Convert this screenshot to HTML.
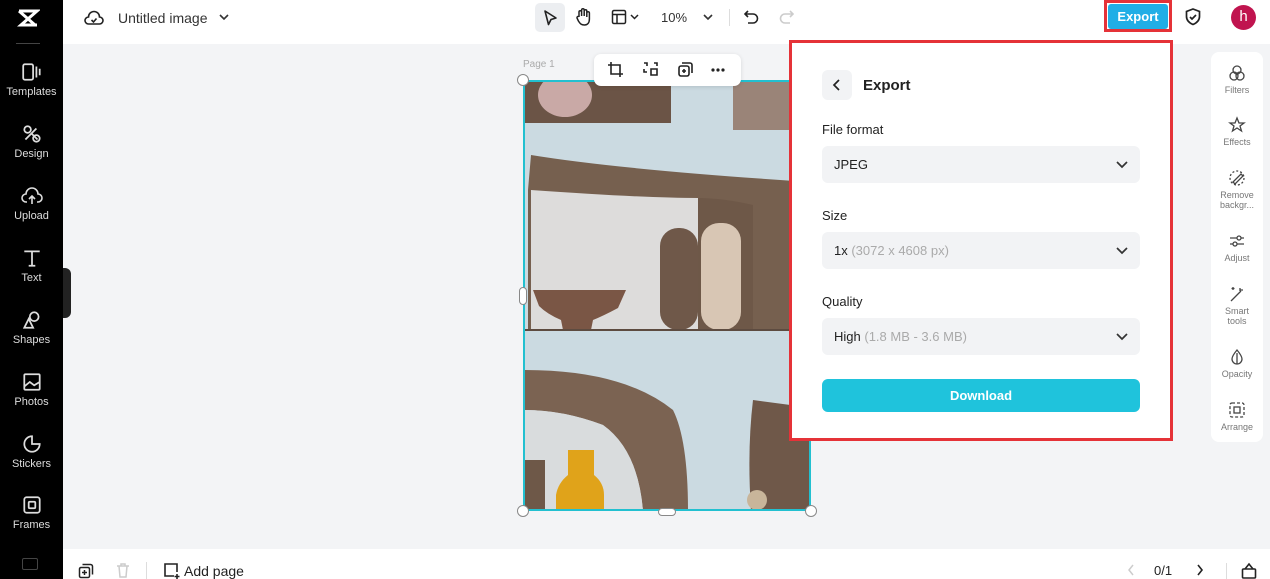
<!DOCTYPE html>
<html><head><meta charset="utf-8"><style>
*{margin:0;padding:0;box-sizing:border-box}
body{width:1270px;height:579px;overflow:hidden;background:#f3f4f6;font-family:"Liberation Sans",sans-serif;position:relative;color:#222}
.abs{position:absolute}
#side{left:0;top:0;width:63px;height:579px;background:#000}
.si{position:absolute;left:0;width:63px;text-align:center;color:#ddd;font-size:11px}
.si svg{display:block;margin:0 auto 4px}
#top{left:63px;top:0;width:1207px;height:44px;background:#fff}
#bot{left:63px;top:549px;width:1207px;height:30px;background:#fff}
.sel{position:absolute;left:822px;width:318px;height:37px;background:#f2f3f5;border-radius:6px;font-size:13px;padding:11px 12px;color:#222}
.sel span{color:#aaa}
.sel svg{position:absolute;right:12px;top:15px}
.lab{position:absolute;left:822px;font-size:13px;color:#222}
.rt{position:absolute;left:1211px;width:52px;text-align:center;font-size:9px;color:#777;line-height:10px}
.rt svg{display:block;margin:0 auto 3px}
</style></head><body>
<div id="side" class="abs">
 <svg class="abs" style="left:16px;top:8px" width="24" height="20" viewBox="0 0 24 20"><path d="M3 3h18L5 17h16M3 3l16 14M21 3L5 17" stroke="#fff" stroke-width="3" fill="none"/></svg>
 <div class="abs" style="left:16px;top:43px;width:24px;height:1px;background:#444"></div>
 <div class="si" style="top:62px"><svg width="22" height="20" viewBox="0 0 20 18" fill="none" stroke="#ddd" stroke-width="1.6"><rect x="2" y="2" width="9" height="14" rx="1.5"/><path d="M14 4v10M17 6v6"/></svg>Templates</div>
 <div class="si" style="top:124px"><svg width="22" height="20" viewBox="0 0 20 18" fill="none" stroke="#ddd" stroke-width="1.6"><circle cx="6" cy="5" r="3"/><path d="M9 8l6 6M4 14l10-10"/><circle cx="14" cy="13" r="3"/></svg>Design</div>
 <div class="si" style="top:186px"><svg width="22" height="20" viewBox="0 0 22 18" fill="none" stroke="#ddd" stroke-width="1.6"><path d="M6 15H5a4 4 0 010-8 6 6 0 0112 0 4 4 0 010 8h-1M11 9v8M8 12l3-3 3 3"/></svg>Upload</div>
 <div class="si" style="top:248px"><svg width="22" height="20" viewBox="0 0 20 18" fill="none" stroke="#ddd" stroke-width="1.6"><path d="M3 3h14M10 3v13M7 16h6"/></svg>Text</div>
 <div class="si" style="top:310px"><svg width="22" height="20" viewBox="0 0 20 18" fill="none" stroke="#ddd" stroke-width="1.6"><circle cx="12" cy="6" r="4"/><path d="M3 16l4-8 4 8z"/></svg>Shapes</div>
 <div class="si" style="top:372px"><svg width="22" height="20" viewBox="0 0 20 18" fill="none" stroke="#ddd" stroke-width="1.6"><rect x="3" y="2" width="14" height="14" rx="1"/><path d="M3 13l5-4 4 3 5-3"/></svg>Photos</div>
 <div class="si" style="top:434px"><svg width="22" height="20" viewBox="0 0 20 18" fill="none" stroke="#ddd" stroke-width="1.6"><path d="M10 2a7 7 0 107 7h-7z"/></svg>Stickers</div>
 <div class="si" style="top:495px"><svg width="22" height="20" viewBox="0 0 20 18" fill="none" stroke="#ddd" stroke-width="1.6"><rect x="3" y="2" width="14" height="14" rx="2"/><rect x="7" y="6" width="6" height="6" rx="1"/></svg>Frames</div>
 <div class="abs" style="left:22px;top:558px;width:16px;height:12px;border:1.5px solid #444;border-radius:2px"></div>
</div>
<div class="abs" style="left:63px;top:268px;width:8px;height:50px;background:#222;border-radius:0 6px 6px 0"></div>
<div id="top" class="abs"></div>
<svg class="abs" style="left:84px;top:9px" width="20" height="18" viewBox="0 0 20 18" fill="none" stroke="#222" stroke-width="1.6"><path d="M5 15H4.5a3.5 3.5 0 010-7 5.5 5.5 0 0111 0 3.5 3.5 0 010 7z"/><path d="M7.5 11l2 2 3-3.5"/></svg>
<div class="abs" style="left:118px;top:10px;font-size:14px;color:#333">Untitled image</div>
<svg class="abs" style="left:219px;top:13px" width="10" height="8"><path d="M1 2l4 4 4-4" stroke="#333" stroke-width="1.6" fill="none"/></svg>
<div class="abs" style="left:535px;top:3px;width:30px;height:29px;background:#eceef1;border-radius:5px"></div>
<svg class="abs" style="left:541px;top:8px" width="18" height="20"><path d="M4 3l11 7-5 1.5-2.5 5z" stroke="#222" stroke-width="1.6" fill="none" stroke-linejoin="round"/></svg>
<svg class="abs" style="left:574px;top:7px" width="18" height="20" fill="none" stroke="#222" stroke-width="1.5"><path d="M5 10V5a1.3 1.3 0 012.6 0v4V3a1.3 1.3 0 012.6 0v6V4a1.3 1.3 0 012.6 0v6V6a1.3 1.3 0 012.6 0v6c0 4-2 6-5 6s-4-1-6-4L3 11a1.3 1.3 0 012-1.4z"/></svg>
<svg class="abs" style="left:611px;top:9px" width="30" height="16" fill="none" stroke="#222" stroke-width="1.5"><rect x="1.5" y="1.5" width="13" height="13" rx="1.5"/><path d="M1.5 5.5h13M6 5.5v9M20 6l3.5 3.5L27 6"/></svg>
<div class="abs" style="left:661px;top:10px;font-size:13px;color:#333">10%</div>
<svg class="abs" style="left:703px;top:13px" width="10" height="8"><path d="M1 2l4 4 4-4" stroke="#333" stroke-width="1.6" fill="none"/></svg>
<div class="abs" style="left:729px;top:9px;width:1px;height:17px;background:#ddd"></div>
<svg class="abs" style="left:743px;top:9px" width="18" height="16" fill="none" stroke="#222" stroke-width="1.6"><path d="M5 2L2 5l3 3M2 5h8a4.5 4.5 0 010 9H5"/></svg>
<svg class="abs" style="left:777px;top:9px" width="18" height="16" fill="none" stroke="#ccc" stroke-width="1.6"><path d="M13 2l3 3-3 3M16 5H8a4.5 4.5 0 000 9h5"/></svg>
<div class="abs" style="left:1104px;top:0;width:68px;height:32px;border:3px solid #e53238"></div>
<div class="abs" style="left:1108px;top:4px;width:60px;height:25px;background:#21aee6;border-radius:3px;color:#fff;font-weight:bold;font-size:13px;text-align:center;line-height:25px">Export</div>
<svg class="abs" style="left:1184px;top:7px" width="18" height="20" fill="none" stroke="#222" stroke-width="1.7"><path d="M9 2l6.5 2.5v5c0 4-3 6.5-6.5 8-3.5-1.5-6.5-4-6.5-8v-5z"/><path d="M6 10l2 2 4-4"/></svg>
<div class="abs" style="left:1231px;top:5px;width:25px;height:25px;border-radius:50%;background:#c0144f;color:#fff;font-size:15px;text-align:center;line-height:24px">h</div>

<div class="abs" style="left:523px;top:59px;font-size:10px;color:#aaa">Page 1</div>
<svg class="abs" style="left:523px;top:80px" width="288" height="431" viewBox="0 0 288 431">
 <rect width="288" height="431" fill="#cbdae1"/>
 <rect x="2" y="0" width="146" height="43" fill="#6b5446"/>
 <ellipse cx="42" cy="15" rx="27" ry="22" fill="#c9a9a6"/>
 <rect x="210" y="0" width="78" height="50" fill="#9a8478"/>
 <path d="M5 110L8 75Q100 90 288 102V250H5z" fill="#76604f"/>
 <path d="M8 110Q120 118 175 118L175 250H8z" fill="#dddcdb"/>
 <path d="M175 118Q200 118 230 125L230 250H175z" fill="#6e5848"/>
 <rect x="137" y="148" width="38" height="102" rx="18" fill="#6f5849"/>
 <rect x="178" y="143" width="40" height="107" rx="18" fill="#d8c6b4"/>
 <path d="M10 210h93l-8 18q-15 8-25 12l-2 10H40l-2-10q-14-6-22-14z" fill="#7a5645"/>
 <rect x="0" y="249" width="288" height="2" fill="#5d4b40"/>
 <path d="M2 290Q100 290 150 330Q165 360 165 431H120Q115 370 80 345Q40 330 2 330z" fill="#7b6352"/>
 <path d="M2 330Q40 330 80 345Q115 370 120 431H2z" fill="#d9dcdd"/>
 <rect x="2" y="380" width="20" height="51" fill="#6e5848"/>
 <path d="M230 320L275 326 288 330V431H228Q224 370 230 320z" fill="#6f5849"/>
 <path d="M45 370h26v25q10 8 10 20v16H33v-16q2-12 12-20z" fill="#e0a31a"/>
 <circle cx="234" cy="420" r="10" fill="#c8b59a"/>
</svg>
<div class="abs" style="left:523px;top:80px;width:288px;height:431px;border:2px solid #22c0d0"></div>
<div class="abs" style="left:517px;top:74px;width:12px;height:12px;border-radius:50%;background:#fff;border:1px solid #888"></div>
<div class="abs" style="left:517px;top:505px;width:12px;height:12px;border-radius:50%;background:#fff;border:1px solid #888"></div>
<div class="abs" style="left:805px;top:505px;width:12px;height:12px;border-radius:50%;background:#fff;border:1px solid #888"></div>
<div class="abs" style="left:519px;top:287px;width:8px;height:18px;border-radius:4px;background:#fff;border:1px solid #888"></div>
<div class="abs" style="left:658px;top:508px;width:18px;height:8px;border-radius:4px;background:#fff;border:1px solid #888"></div>
<div class="abs" style="left:594px;top:54px;width:147px;height:32px;background:#fff;border-radius:7px;box-shadow:0 1px 4px rgba(0,0,0,.12)"></div>
<svg class="abs" style="left:607px;top:61px" width="124" height="18" fill="none" stroke="#222" stroke-width="1.6"><path d="M4 1v12h12M1 4h12v12"/><path d="M37 2h3v3M37 8v3h3M47 2h3v3M44 8h6v6h-6z"/><rect x="72" y="5" width="10" height="10" rx="2"/><path d="M75 2h8a2 2 0 012 2v8M77 8v4M75 10h4"/><circle cx="106" cy="9" r=".8" fill="#222"/><circle cx="111" cy="9" r=".8" fill="#222"/><circle cx="116" cy="9" r=".8" fill="#222"/></svg>

<div class="abs" style="left:789px;top:40px;width:384px;height:401px;border:3px solid #e53238;background:#fff"></div>
<div class="abs" style="left:822px;top:70px;width:30px;height:30px;background:#f2f3f5;border-radius:6px"></div>
<svg class="abs" style="left:832px;top:79px" width="10" height="12"><path d="M7 1L2 6l5 5" stroke="#222" stroke-width="1.7" fill="none"/></svg>
<div class="abs" style="left:863px;top:77px;font-size:15px;font-weight:bold">Export</div>
<div class="lab" style="top:122px">File format</div>
<div class="sel" style="top:146px">JPEG<svg width="12" height="8"><path d="M1 1l5 5 5-5" stroke="#333" stroke-width="1.7" fill="none"/></svg></div>
<div class="lab" style="top:208px">Size</div>
<div class="sel" style="top:232px">1x <span>(3072 x 4608 px)</span><svg width="12" height="8"><path d="M1 1l5 5 5-5" stroke="#333" stroke-width="1.7" fill="none"/></svg></div>
<div class="lab" style="top:294px">Quality</div>
<div class="sel" style="top:318px">High <span>(1.8 MB - 3.6 MB)</span><svg width="12" height="8"><path d="M1 1l5 5 5-5" stroke="#333" stroke-width="1.7" fill="none"/></svg></div>
<div class="abs" style="left:822px;top:379px;width:318px;height:33px;background:#1fc3dc;border-radius:6px;color:#fff;font-size:13px;font-weight:bold;text-align:center;line-height:33px">Download</div>

<div class="abs" style="left:1211px;top:52px;width:52px;height:390px;background:#fff;border-radius:8px"></div>
<div class="rt" style="top:64px"><svg width="18" height="18" fill="none" stroke="#444" stroke-width="1.3"><circle cx="9" cy="6" r="4"/><circle cx="6" cy="12" r="4"/><circle cx="12" cy="12" r="4"/></svg>Filters</div>
<div class="rt" style="top:116px"><svg width="18" height="18" fill="none" stroke="#444" stroke-width="1.3"><path d="M9 2l2 5h5l-4 3 1.5 5L9 12l-4.5 3L6 10 2 7h5z"/></svg>Effects</div>
<div class="rt" style="top:169px"><svg width="18" height="18" fill="none" stroke="#444" stroke-width="1.3"><circle cx="9" cy="9" r="7" stroke-dasharray="2 2"/><path d="M5 13l8-8 2 2-8 8z"/></svg>Remove<br>backgr...</div>
<div class="rt" style="top:232px"><svg width="18" height="18" fill="none" stroke="#444" stroke-width="1.3"><path d="M2 6h14M2 12h14"/><circle cx="11" cy="6" r="2" fill="#fff"/><circle cx="7" cy="12" r="2" fill="#fff"/></svg>Adjust</div>
<div class="rt" style="top:285px"><svg width="18" height="18" fill="none" stroke="#444" stroke-width="1.3"><path d="M3 16L13 6M12 3v3M15 5h-3M5 2v3M3.5 3.5h3"/></svg>Smart<br>tools</div>
<div class="rt" style="top:348px"><svg width="18" height="18" fill="none" stroke="#444" stroke-width="1.3"><path d="M9 2Q4 8 4 11a5 5 0 0010 0Q14 8 9 2z"/><path d="M9 5v11" /></svg>Opacity</div>
<div class="rt" style="top:401px"><svg width="18" height="18" fill="none" stroke="#444" stroke-width="1.3"><rect x="2" y="2" width="14" height="14" rx="2" stroke-dasharray="3 2"/><rect x="6" y="6" width="6" height="6"/></svg>Arrange</div>

<div id="bot" class="abs"></div>
<svg class="abs" style="left:78px;top:563px" width="16" height="16" fill="none" stroke="#222" stroke-width="1.5"><rect x="1.5" y="4.5" width="10" height="10" rx="1.5"/><path d="M4.5 1.5h8a2 2 0 012 2v8M6.5 7v5M4 9.5h5"/></svg>
<svg class="abs" style="left:116px;top:563px" width="14" height="16" fill="none" stroke="#ccc" stroke-width="1.5"><path d="M1 3h12M3 3l1 11h6l1-11M5 3V1h4v2"/></svg>
<div class="abs" style="left:146px;top:562px;width:1px;height:17px;background:#ddd"></div>
<svg class="abs" style="left:163px;top:562px" width="18" height="17" fill="none" stroke="#222" stroke-width="1.6"><path d="M11 14H2V2h12v8M14 12v5M11.5 14.5h5"/></svg>
<div class="abs" style="left:184px;top:563px;font-size:14px;color:#222">Add page</div>
<svg class="abs" style="left:1127px;top:563px" width="8" height="14"><path d="M6 2L2 7l4 5" stroke="#ccc" stroke-width="1.5" fill="none"/></svg>
<div class="abs" style="left:1154px;top:563px;font-size:13px;color:#222">0/1</div>
<svg class="abs" style="left:1196px;top:563px" width="8" height="14"><path d="M2 2l4 5-4 5" stroke="#222" stroke-width="1.6" fill="none"/></svg>
<div class="abs" style="left:1226px;top:563px;width:1px;height:16px;background:#ddd"></div>
<svg class="abs" style="left:1241px;top:562px" width="16" height="17" fill="none" stroke="#222" stroke-width="1.6"><rect x="1.5" y="7" width="13" height="9" rx="1"/><path d="M4 7l4-5 4 5"/></svg>
</body></html>
